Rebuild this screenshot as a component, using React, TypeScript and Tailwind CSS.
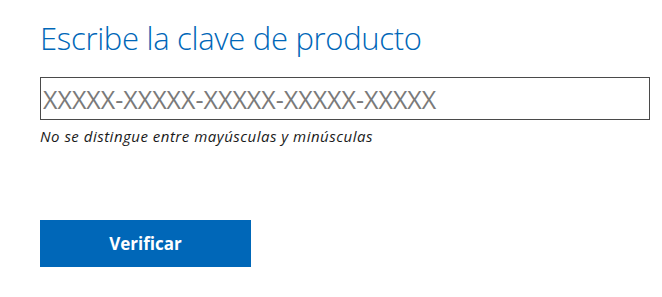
import React from "react";

const App = () => {
  return (
    <div className="bg-white w-[662px] h-[297px] pl-10 pt-[17px] font-['Open_Sans','Liberation_Sans',sans-serif]">
      <h1 className="text-[31px] leading-[42px] font-light text-[#0067b8] tracking-[-0.3px]">
        Escribe la clave de producto
      </h1>
      <input
        type="text"
        placeholder="XXXXX-XXXXX-XXXXX-XXXXX-XXXXX"
        className="mt-[18px] w-[610px] h-[43px] border border-[#4a4a4a] px-[2px] text-[25px] text-[#333] placeholder:text-[#7a7a7a] outline-none"
      />
      <p className="mt-[6px] text-[15px] italic text-[#1a1a1a] leading-[20px] tracking-[0.5px]">
        No se distingue entre mayúsculas y minúsculas
      </p>
      <button className="mt-[74px] w-[211px] h-[47px] bg-[#0067b8] text-white text-[17px] font-bold">
        Verificar
      </button>
    </div>
  );
};

export default App;
